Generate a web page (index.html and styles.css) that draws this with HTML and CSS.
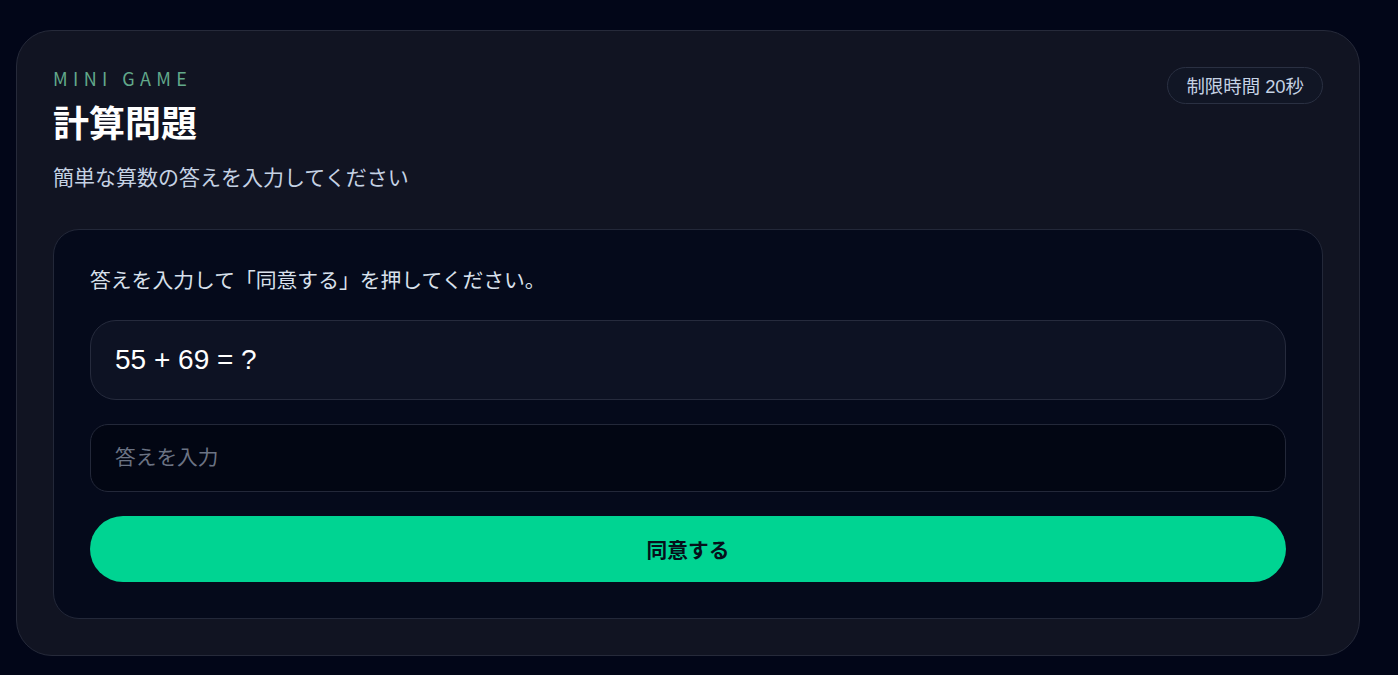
FILE: index.html
```html
<!DOCTYPE html>
<html lang="ja">
<head>
<meta charset="utf-8">
<title>計算問題</title>
<link rel="stylesheet" href="styles.css">
</head>
<body>
<main class="card">
  <header class="head">
    <div class="head-text">
      <p class="eyebrow">MINI GAME</p>
      <h1 class="title">計算問題</h1>
      <p class="subtitle">簡単な算数の答えを入力してください</p>
    </div>
    <span class="badge">制限時間 20秒</span>
  </header>
  <section class="panel">
    <p class="instruction">答えを入力して「同意する」を押してください。</p>
    <div class="question">55 + 69 = ?</div>
    <input class="answer" type="text" placeholder="答えを入力">
    <button class="submit" type="button">同意する</button>
  </section>
</main>
</body>
</html>
```

FILE: styles.css
```css
* { box-sizing: border-box; }
html, body { margin: 0; }
body {
  background: #020618;
  font-family: "Liberation Sans", "Noto Sans CJK JP", sans-serif;
  padding: 30px 38px 20px 16px;
  min-height: 675px;
}
.card {
  background: #111422;
  border: 1px solid #262a3a;
  border-radius: 36px;
  padding: 36px;
}
.head {
  display: flex;
  justify-content: space-between;
  align-items: flex-start;
}
.eyebrow {
  margin: 0;
  font-family: "Noto Sans CJK JP", sans-serif;
  font-size: 18px;
  line-height: 22px;
  letter-spacing: 0.3em;
  color: #62a98b;
}
.title {
  margin: 14px 0 0;
  font-size: 36px;
  line-height: 44px;
  font-weight: 700;
  color: #ffffff;
}
.subtitle {
  margin: 16px 0 0;
  font-size: 21px;
  line-height: 30px;
  color: #c5d2e4;
}
.badge {
  display: inline-flex;
  align-items: center;
  height: 37px;
  padding: 0 18px 2px;
  border: 1px solid #2a3042;
  border-radius: 999px;
  font-size: 18.4px;
  color: #c5d2e4;
  background: #111625;
}
.panel {
  margin-top: 36px;
  background: #050a1b;
  border: 1px solid #232839;
  border-radius: 26px;
  padding: 36px;
  display: flex;
  flex-direction: column;
  gap: 24px;
}
.instruction {
  margin: 0;
  font-size: 20.8px;
  line-height: 30px;
  color: #d9e1ec;
}
.question {
  background: #0d1223;
  border: 1px solid #262b3d;
  border-radius: 26px;
  padding: 22px 24px;
  font-size: 28px;
  line-height: 34px;
  color: #ffffff;
}
.answer {
  display: block;
  width: 100%;
  height: 68px;
  background: #020613;
  border: 1px solid #232839;
  border-radius: 18px;
  padding: 0 24px;
  font-family: inherit;
  font-size: 20.7px;
  color: #ffffff;
  outline: none;
}
.answer::placeholder { color: #6b7384; }
.submit {
  height: 66px;
  border: 0;
  border-radius: 999px;
  background: #00d492;
  color: #06101a;
  font-family: inherit;
  font-size: 20.7px;
  font-weight: 700;
  cursor: pointer;
}
```
